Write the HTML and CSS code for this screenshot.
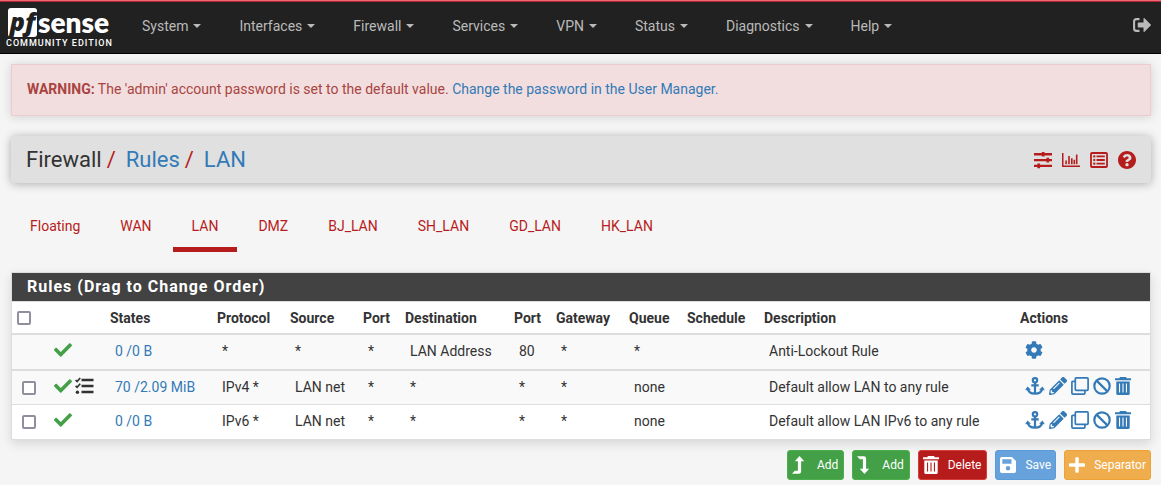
FILE: index.html
```html
<!DOCTYPE html>
<html lang="en">
<head>
<meta charset="utf-8">
<title>Firewall: Rules: LAN</title>
<link rel="stylesheet" href="styles.css">
</head>
<body>
<svg class="sprite" aria-hidden="true">
  <symbol id="check" viewBox="0 0 512 512"><path d="M173.898 439.404l-166.4-166.4c-9.997-9.997-9.997-26.206 0-36.204l36.203-36.204c9.997-9.998 26.207-9.998 36.204 0L192 312.69 432.095 72.596c9.997-9.997 26.207-9.997 36.204 0l36.203 36.204c9.997 9.997 9.997 26.206 0 36.204l-294.4 294.401c-9.998 9.997-26.207 9.997-36.204-.001z"/></symbol>
  <symbol id="tasks" viewBox="0 0 19 18"><path d="M6.500 1.700h12v2.600h-12zM6.500 7.700h12v2.600h-12zM6.500 13.700h12v2.600h-12z"/><circle cx="2.400" cy="15.200" r="1.700"/><path d="M.6 3l1.500 1.500L5.200 1M.6 8.800l1.500 1.500 3.100-3.500" fill="none" stroke="currentColor" stroke-width="1.700"/></symbol>
  <symbol id="gear" viewBox="0 0 512 512"><path d="M487.400 315.700l-42.600-24.600c4.300-23.200 4.300-47 0-70.200l42.600-24.600c4.900-2.800 7.100-8.600 5.500-14-11.100-35.600-30-67.800-54.700-94.600-3.800-4.100-10-5.100-14.800-2.300L380.800 110c-17.900-15.400-38.500-27.300-60.800-35.100V25.800c0-5.600-3.900-10.500-9.400-11.700-36.700-8.200-74.300-7.800-109.200 0-5.500 1.200-9.400 6.100-9.400 11.700V75c-22.200 7.900-42.800 19.800-60.800 35.100L88.700 85.500c-4.900-2.800-11-1.900-14.800 2.300-24.700 26.700-43.600 58.900-54.700 94.600-1.700 5.400.6 11.200 5.500 14L67.300 221c-4.300 23.200-4.300 47 0 70.200l-42.600 24.600c-4.900 2.800-7.100 8.600-5.500 14 11.100 35.600 30 67.800 54.700 94.600 3.800 4.100 10 5.100 14.800 2.300l42.600-24.600c17.900 15.400 38.500 27.300 60.800 35.100v49.200c0 5.600 3.900 10.500 9.400 11.700 36.700 8.200 74.300 7.800 109.200 0 5.500-1.200 9.400-6.100 9.400-11.700v-49.200c22.200-7.900 42.800-19.800 60.800-35.100l42.600 24.600c4.900 2.800 11 1.900 14.800-2.300 24.700-26.700 43.600-58.900 54.700-94.600 1.500-5.500-.7-11.300-5.600-14.100zM256 336c-44.100 0-80-35.900-80-80s35.900-80 80-80 80 35.900 80 80-35.900 80-80 80z"/></symbol>
  <symbol id="anchor" viewBox="0 0 20 18"><g fill="none" stroke="currentColor" stroke-width="2.200"><circle cx="10" cy="3.300" r="2.200"/><path d="M10 5.500V17M6.300 8.300h7.400M2.700 11.500c.5 3.300 3.500 5.200 7.300 5.200s6.800-1.900 7.300-5.200"/></g><path d="M.2 13.200L2.500 9.400l3.400 3.400zM19.800 13.200l-2.300-3.800-3.400 3.400z"/></symbol>
  <symbol id="pencil" viewBox="0 0 512 512"><path d="M497.900 142.100l-46.100 46.100c-4.700 4.700-12.300 4.700-17 0l-111-111c-4.700-4.700-4.700-12.300 0-17l46.100-46.100c18.700-18.700 49.100-18.700 67.900 0l60.100 60.100c18.800 18.700 18.800 49.100 0 67.900zM284.200 99.800L21.600 362.400.4 483.900c-2.900 16.400 11.400 30.600 27.800 27.800l121.500-21.300 262.600-262.600c4.700-4.700 4.700-12.300 0-17l-111-111c-4.800-4.700-12.400-4.700-17.100 0zM124.100 339.900c-5.500-5.500-5.500-14.300 0-19.800l154-154c5.500-5.500 14.300-5.500 19.800 0s5.500 14.300 0 19.800l-154 154c-5.500 5.500-14.300 5.500-19.800 0zM88 424h48v36.300l-64.500 11.300-31.100-31.100L51.700 376H88v48z"/></symbol>
  <symbol id="clone" viewBox="0 0 18 18"><g fill="none" stroke="currentColor" stroke-width="1.700"><rect x="4.300" y=".9" width="12.800" height="12.400" rx="1"/><path d="M4.300 4.300H1.900a1 1 0 0 0-1 1v10.800a1 1 0 0 0 1 1h11a1 1 0 0 0 1-1v-3"/></g></symbol>
  <symbol id="ban" viewBox="0 0 18 18"><g fill="none" stroke="currentColor" stroke-width="2.200"><circle cx="9" cy="9" r="7.700"/><path d="M3.600 3.600l10.800 10.800"/></g></symbol>
  <symbol id="trash" viewBox="0 0 16 18"><path fill-rule="evenodd" d="M5 0h6l.8 1.200H16v2H0v-2h4.200zM1.300 4.400h13.400V16.500A1.500 1.500 0 0 1 13.200 18H2.800a1.500 1.500 0 0 1-1.500-1.500zM4 6.600v9h1.100v-9zM7.450 6.600v9h1.100v-9zM10.900 6.600v9H12v-9z"/></symbol>
  <symbol id="sliders" viewBox="0 0 18 18"><path d="M0 2.100h18v2.400H0zM0 7.900h18v2.400H0zM0 13.700h18v2.400H0zM7.800 1h2.700v4.600H7.800zM12.400 6.800h2.700v4.600h-2.700zM3.400 12.600h2.700v4.600H3.400z"/></symbol>
  <symbol id="chart" viewBox="0 0 18 18"><path d="M0 2h1.500v12.500H18V16H0zM3.300 9.500h1.600v3.700H3.300zM6.200 5h1.600v8.200H6.200zM9 7.200h1.600v6H9zM13.900 3.500h1.600v9.700h-1.600zM11.500 8.700h1.600v4.500h-1.600z"/></symbol>
  <symbol id="list" viewBox="0 0 18 18"><rect x="1" y="2" width="16" height="14" rx="1" fill="none" stroke="currentColor" stroke-width="1.800"/><path d="M3.300 4.300h2v2.200h-2zM6.500 4.500h8.300v1.800H6.500zM3.300 7.900h2v2.200h-2zM6.500 8.100h8.300v1.800H6.500zM3.300 11.500h2v2.200h-2zM6.500 11.700h8.300v1.800H6.500z"/></symbol>
  <symbol id="question" viewBox="8 8 496 496"><path d="M504 256c0 136.997-111.043 248-248 248S8 392.997 8 256C8 119.083 119.043 8 256 8s248 111.083 248 248zM262.655 90c-54.497 0-89.255 22.957-116.549 63.758-3.536 5.286-2.353 12.415 2.715 16.258l34.699 26.310c5.205 3.947 12.621 3.008 16.665-2.122 17.864-22.658 30.113-35.797 57.303-35.797 20.429 0 45.698 13.148 45.698 32.958 0 14.976-12.363 22.667-32.534 33.976C247.128 238.528 216 254.941 216 296v4c0 6.627 5.373 12 12 12h56c6.627 0 12-5.373 12-12v-1.333c0-28.462 83.186-29.647 83.186-106.667 0-58.002-60.165-102-116.531-102zM256 338c-25.365 0-46 20.635-46 46 0 25.364 20.635 46 46 46s46-20.636 46-46c0-25.365-20.635-46-46-46z"/></symbol>
  <symbol id="logout" viewBox="0 0 18 14"><path d="M6.500 1.100H3.600a2.500 2.500 0 0 0-2.500 2.500v6.800a2.500 2.500 0 0 0 2.500 2.500h2.900" fill="none" stroke="currentColor" stroke-width="2.100"/><path d="M5.500 4.500h5V.7c0-.7.600-.8 1-.4l6.200 6.100c.4.400.4.800 0 1.200l-6.200 6.100c-.4.400-1 .3-1-.4V9.500h-5c-.5 0-.8-.3-.8-.8V5.300c0-.5.300-.8.800-.8z"/></symbol>
  <symbol id="turn-up" viewBox="0 0 16 18"><path d="M7.500 0l4.700 5.200H9.100V15.500a2.300 2.300 0 0 1-2.300 2.300H0l2.800-3H5.900V5.200H2.800z"/></symbol>
  <symbol id="turn-down" viewBox="0 0 16 18"><path d="M7.500 18l4.700-5.200H9.100V2.500A2.300 2.300 0 0 0 6.800.2H0l2.800 3H5.900v9.600H2.800z"/></symbol>
  <symbol id="save" viewBox="0 0 16 18"><path fill-rule="evenodd" d="M1.700 1h10.200L16 5v10.300a1.700 1.700 0 0 1-1.700 1.700H1.700A1.700 1.700 0 0 1 0 15.300V2.700A1.700 1.700 0 0 1 1.700 1zM2.300 3.300v4.400h9.200V3.300zM8 10a2.300 2.300 0 1 0 0 4.600A2.300 2.300 0 0 0 8 10z"/></symbol>
  <symbol id="plus" viewBox="0 0 16 18"><path d="M6.300 2.200a1 1 0 0 1 1-1h1.400a1 1 0 0 1 1 1v5.100H15a1 1 0 0 1 1 1v1.400a1 1 0 0 1-1 1H9.700v5.100a1 1 0 0 1-1 1H7.300a1 1 0 0 1-1-1v-5.100H1a1 1 0 0 1-1-1V8.300a1 1 0 0 1 1-1h5.300z"/></symbol>
</svg>

<nav class="navbar">
  <a class="brand" href="#" aria-label="pfsense community edition">
    <span class="logo"><span class="logo-box">pf</span><span class="logo-name">sense</span></span>
    <span class="edition">COMMUNITY EDITION</span>
  </a>
  <div class="menu">
    <button type="button">System</button>
    <button type="button">Interfaces</button>
    <button type="button">Firewall</button>
    <button type="button">Services</button>
    <button type="button">VPN</button>
    <button type="button">Status</button>
    <button type="button">Diagnostics</button>
    <button type="button">Help</button>
  </div>
  <a class="logout" href="#" aria-label="Logout"><svg><use href="#logout"/></svg></a>
</nav>

<main class="container">
  <div class="alert"><strong>WARNING:</strong> The 'admin' account password is set to the default value. <a href="#">Change the password in the User Manager.</a></div>

  <header class="page-header">
    <h1 class="crumbs"><span>Firewall</span><i>/</i><a href="#">Rules</a><i>/</i><a href="#">LAN</a></h1>
    <div class="tools">
      <a href="#" aria-label="Advanced settings"><svg class="icon"><use href="#sliders"/></svg></a>
      <a href="#" aria-label="Status graph"><svg class="icon"><use href="#chart"/></svg></a>
      <a href="#" aria-label="Log entries"><svg class="icon"><use href="#list"/></svg></a>
      <a href="#" aria-label="Help for this page"><svg class="icon"><use href="#question"/></svg></a>
    </div>
  </header>

  <div class="tabs">
    <a href="#">Floating</a><a href="#">WAN</a><a href="#" class="active">LAN</a><a href="#">DMZ</a><a href="#">BJ_LAN</a><a href="#">SH_LAN</a><a href="#">GD_LAN</a><a href="#">HK_LAN</a>
  </div>

  <section class="panel">
    <h2>Rules (Drag to Change Order)</h2>
    <table>
      <colgroup><col class="c-box"><col class="c-icon"><col class="c-states"><col class="c-mid"><col class="c-mid"><col class="c-port"><col class="c-dest"><col class="c-port"><col class="c-mid"><col class="c-queue"><col class="c-sched"><col><col class="c-act"></colgroup>
      <thead>
        <tr><th><input type="checkbox" aria-label="Select all rules"></th><th></th><th>States</th><th>Protocol</th><th>Source</th><th>Port</th><th>Destination</th><th>Port</th><th>Gateway</th><th>Queue</th><th>Schedule</th><th>Description</th><th>Actions</th></tr>
      </thead>
      <tbody>
        <tr class="fixed"><td></td><td><div class="marks"><svg class="icon"><use href="#check"/></svg></div></td><td><a href="#">0 /0 B</a></td><td>*</td><td>*</td><td>*</td><td>LAN Address</td><td>80</td><td>*</td><td>*</td><td></td><td>Anti-Lockout Rule</td>
          <td><div class="actions"><a href="#" aria-label="Settings"><svg class="icon"><use href="#gear"/></svg></a></div></td></tr>
        <tr class="shade"><td><input type="checkbox" aria-label="Select IPv4 rule"></td><td><div class="marks"><svg class="icon"><use href="#check"/></svg><svg class="icon dark"><use href="#tasks"/></svg></div></td><td><a href="#">70 /2.09 MiB</a></td><td>IPv4 *</td><td>LAN net</td><td>*</td><td>*</td><td>*</td><td>*</td><td>none</td><td></td><td>Default allow LAN to any rule</td>
          <td><div class="actions"><a href="#" aria-label="Move"><svg class="icon wide"><use href="#anchor"/></svg></a><a href="#" aria-label="Edit"><svg class="icon"><use href="#pencil"/></svg></a><a href="#" aria-label="Copy"><svg class="icon"><use href="#clone"/></svg></a><a href="#" aria-label="Disable"><svg class="icon"><use href="#ban"/></svg></a><a href="#" aria-label="Delete"><svg class="icon narrow"><use href="#trash"/></svg></a></div></td></tr>
        <tr><td><input type="checkbox" aria-label="Select IPv6 rule"></td><td><div class="marks"><svg class="icon"><use href="#check"/></svg></div></td><td><a href="#">0 /0 B</a></td><td>IPv6 *</td><td>LAN net</td><td>*</td><td>*</td><td>*</td><td>*</td><td>none</td><td></td><td>Default allow LAN IPv6 to any rule</td>
          <td><div class="actions"><a href="#" aria-label="Move"><svg class="icon wide"><use href="#anchor"/></svg></a><a href="#" aria-label="Edit"><svg class="icon"><use href="#pencil"/></svg></a><a href="#" aria-label="Copy"><svg class="icon"><use href="#clone"/></svg></a><a href="#" aria-label="Disable"><svg class="icon"><use href="#ban"/></svg></a><a href="#" aria-label="Delete"><svg class="icon narrow"><use href="#trash"/></svg></a></div></td></tr>
      </tbody>
    </table>
  </section>

  <div class="buttons">
    <button type="button" class="btn green"><svg><use href="#turn-up"/></svg>Add</button>
    <button type="button" class="btn green"><svg><use href="#turn-down"/></svg>Add</button>
    <button type="button" class="btn red"><svg><use href="#trash"/></svg>Delete</button>
    <button type="button" class="btn blue"><svg><use href="#save"/></svg>Save</button>
    <button type="button" class="btn orange"><svg><use href="#plus"/></svg>Separator</button>
  </div>
</main>
</body>
</html>
```
FILE: styles.css
```css
* { box-sizing: border-box; }

body {
  margin: 0;
  background: #f5f5f5;
  color: #333;
  font: 14px/20px Roboto, sans-serif;
}

a { color: #337ab7; text-decoration: none; }
svg { display: block; fill: currentColor; }
.sprite { display: none; }
.icon { width: 18px; height: 18px; flex: none; }
.wide { width: 20px; }
.narrow { width: 16px; }

.navbar {
  display: flex;
  height: 54px;
  padding: 0 10px 0 6px;
  background: #212121;
  border-top: 1px solid #ee6674;
  border-bottom: 1px solid #000;
  box-shadow: inset 0 1px #b02835;
}
.brand { width: 117px; padding-top: 7px; color: #fff; }
.logo { display: flex; height: 29px; padding-left: 2px; }
.logo-box {
  width: 29px;
  background: #fff;
  border-radius: 3px;
  color: #212121;
  font: italic 800 25px/26px "Open Sans", sans-serif;
  text-align: center;
}
.logo-name { padding-left: 1px; font: 800 28px/28px Lato, sans-serif; }
.edition { display: block; font-size: 9px; font-weight: 500; line-height: 13px; letter-spacing: 1px; white-space: nowrap; }
.menu { display: flex; flex: 1; padding-bottom: 2px; }
.menu button {
  display: flex;
  align-items: center;
  gap: 5px;
  padding: 0 19px;
  border: 0;
  background: none;
  color: #bababa;
  font: inherit;
}
.menu button::after {
  content: "";
  border: 4px solid transparent;
  border-top-color: currentColor;
  border-bottom: 0;
}
.logout { padding-top: 17px; color: #bababa; }
.logout svg { width: 18px; height: 14px; }

.container { padding: 10px 10px 0 11px; }
.alert {
  padding: 14px 15px 16px;
  background: #f2dede;
  border: 1px solid #ebccd1;
  color: #a94442;
  box-shadow: 0 1px 10px rgba(0, 0, 0, .15);
}

.page-header {
  display: flex;
  align-items: center;
  justify-content: space-between;
  height: 47px;
  margin-top: 20px;
  padding: 0 15px;
  background: #e0e0e0;
  border-radius: 4px;
  box-shadow: 0 1px 10px rgba(0, 0, 0, .3);
}
.crumbs { margin: 0; font-size: 22px; font-weight: 400; line-height: 24px; }
.crumbs i { margin: 0 10px 0 5px; color: #b71c1c; font-style: normal; }
.tools { display: flex; gap: 10px; }
.tools a { color: #b71c1c; }

.tabs { display: flex; gap: 2px; margin-top: 25px; }
.tabs a {
  padding: 8px 19px 11px;
  border-bottom: 5px solid transparent;
  color: #b71c1c;
}
.tabs .active { border-color: #b71c1c; }

.panel {
  margin-top: 20px;
  background: #fff;
  border: 1px solid #ddd;
  box-shadow: 0 4px 10px rgba(0, 0, 0, .12);
}
.panel h2 {
  margin: 0;
  padding: 4px 15px;
  background: #424242;
  border-bottom: 1px solid #ddd;
  color: #fff;
  font-size: 16px;
  font-weight: 700;
  line-height: 20px;
  letter-spacing: 1px;
}
table { width: 100%; border-spacing: 0; table-layout: fixed; }
.c-box { width: 32px; }
.c-icon { width: 61px; }
.c-states { width: 107px; }
.c-mid { width: 73px; }
.c-port { width: 42px; }
.c-dest { width: 109px; }
.c-queue { width: 58px; }
.c-sched { width: 77px; }
.c-act { width: 135px; }
th, td { text-align: left; white-space: nowrap; }
th { height: 33px; padding: 0 5px; border-bottom: 2px solid #ddd; }
td { height: 34px; padding: 0 10px 2px; }
.fixed td { height: 36px; background: #f9f9f9; border-bottom: 2px solid #ddd; }
.shade td { background: #f9f9f9; border-bottom: 1px solid #ddd; }
.marks { display: flex; gap: 3px; padding-bottom: 2px; color: #43a047; }
.dark { width: 19px; color: #333; }
.actions { display: flex; gap: 3px; padding-bottom: 2px; }
.actions .icon { margin-right: 1px; }
input[type="checkbox"] {
  display: block;
  appearance: none;
  width: 14px;
  height: 14px;
  margin: 0;
  border: 2px solid #8f8f9d;
  border-radius: 2px;
  background: #fff;
}
td input[type="checkbox"] { margin-top: 2px; }

.buttons { display: flex; justify-content: flex-end; gap: 8px; margin-top: 10px; }
.btn {
  display: flex;
  align-items: center;
  gap: 9px;
  height: 30px;
  padding: 0 5px 0 4px;
  border: 1px solid;
  border-radius: 3px;
  color: #fff;
  font: 12px/18px Roboto, sans-serif;
}
.btn svg { width: 16px; height: 18px; }
.green { background: #43a047; border-color: #4cae4c; }
.red { background: #b71c1c; border-color: #d43f3a; }
.blue { padding-right: 4px; background: #68a2dd; border-color: #5b9bd8; }
.orange { padding-right: 4px; background: #f0ad4e; border-color: #eea236; }
```
